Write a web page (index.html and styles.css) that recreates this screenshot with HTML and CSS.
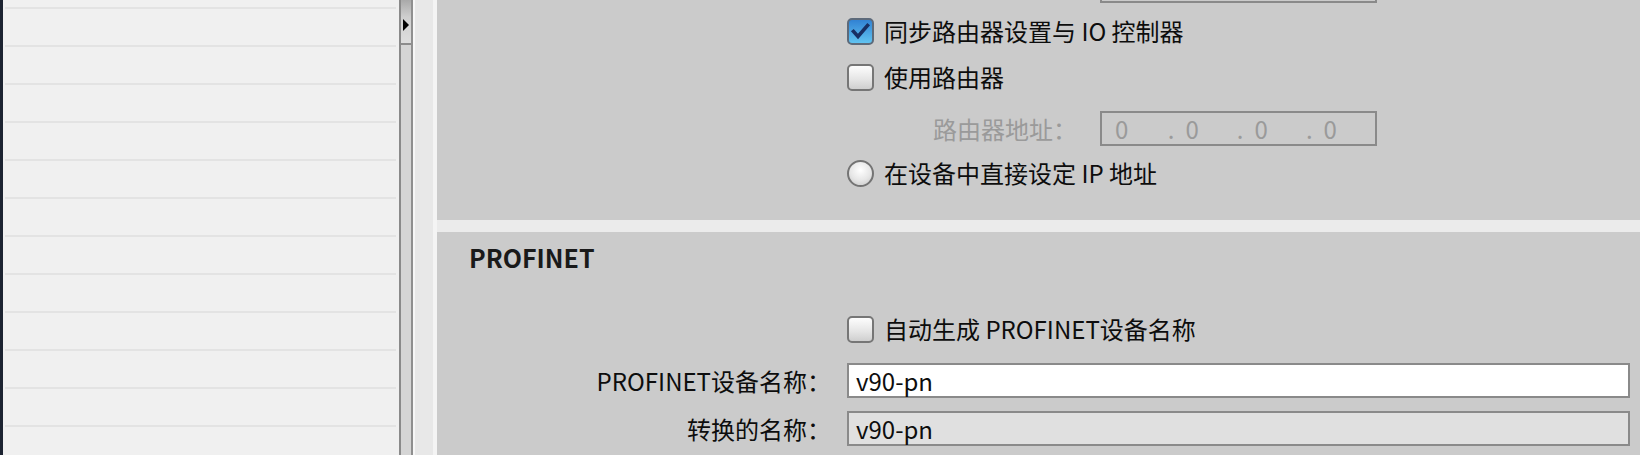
FILE: index.html
```html
<!DOCTYPE html>
<html lang="zh-CN">
<head>
  <meta charset="utf-8">
  <title>PROFINET 接口属性</title>
  <link rel="stylesheet" href="styles.css">
</head>
<body>
  <div class="strip"></div>

  <div class="tree">
    <div class="tree-row"></div>
    <div class="tree-row"></div>
    <div class="tree-row"></div>
    <div class="tree-row"></div>
    <div class="tree-row"></div>
    <div class="tree-row"></div>
    <div class="tree-row"></div>
    <div class="tree-row"></div>
    <div class="tree-row"></div>
    <div class="tree-row"></div>
    <div class="tree-row"></div>
    <div class="tree-row"></div>
    <div class="tree-row"></div>
  </div>

  <div class="splitter">
    <div class="thumb"><span class="arrow"></span></div>
  </div>
  <div class="gutter"></div>

  <div class="content">
    <!-- IP protocol section, scrolled so only its lower part shows -->
    <section class="panel panel-ip">
      <div class="row sub mask-row">
        <span class="sub-label"></span>
        <div class="ipbox"></div>
      </div>

      <div class="row check-row first">
        <span class="check checked">
          <svg width="27" height="27" viewBox="0 0 27 27">
            <defs>
              <linearGradient id="blue" x1="0" y1="0" x2="0" y2="1">
                <stop offset="0" stop-color="#2f7fd2"/>
                <stop offset="1" stop-color="#63c6f2"/>
              </linearGradient>
            </defs>
            <rect x="1" y="1" width="25" height="25" rx="4" fill="url(#blue)" stroke="#5d6a7a" stroke-width="2"/>
            <path d="M6.5 13.5 L11 18.5 L20.5 7.5" fill="none" stroke="#182f63" stroke-width="3.6" stroke-linecap="square"/>
          </svg>
        </span>
        <span class="text">同步路由器设置与 IO 控制器</span>
      </div>

      <div class="row check-row second">
        <span class="check"></span>
        <span class="text">使用路由器</span>
      </div>

      <div class="row sub ip-row">
        <span class="sub-label">路由器地址：</span>
        <div class="ipbox">
          <span class="oct">0</span>
          <span class="oct"><i>.</i>0</span>
          <span class="oct"><i>.</i>0</span>
          <span class="oct"><i>.</i>0</span>
        </div>
      </div>

      <div class="row check-row radio-row">
        <span class="radio"></span>
        <span class="text">在设备中直接设定 IP 地址</span>
      </div>
    </section>

    <section class="panel panel-pn">
      <h2>PROFINET</h2>

      <div class="row check-row auto-row">
        <span class="check"></span>
        <span class="text">自动生成 PROFINET设备名称</span>
      </div>

      <div class="field name-row">
        <label>PROFINET设备名称：</label>
        <div class="input">v90-pn</div>
      </div>

      <div class="field conv-row">
        <label>转换的名称：</label>
        <div class="input readonly">v90-pn</div>
      </div>
    </section>
  </div>
</body>
</html>
```

FILE: styles.css
```css
body {
  margin: 0;
  width: 1640px;
  height: 455px;
  overflow: hidden;
  display: flex;
  background-color: #ebebeb;
  font-family: "Noto Sans CJK SC", "Noto Sans", sans-serif;
  color: #0d0d0d;
}

.strip {
  width: 3px;
  background-color: #1c2331;
}

/* left tree, empty rows */
.tree {
  width: 396px;
  background-color: #f0f0f0;
  overflow: hidden;
}

.tree-row {
  height: 38px;
  box-sizing: border-box;
  margin: 0 3px 0 2px;
  border-bottom: 2px solid #e3e3e3;
}

.tree-row:first-child {
  margin-top: -29px;
}

.splitter {
  width: 10px;
  border-left: 2px solid #8a8a8a;
  border-right: 2px solid #8f8f8f;
  background-color: #d5d5d5;
}

.thumb {
  height: 45px;
  border-bottom: 2px solid #8c8c8c;
  background: linear-gradient(#a9a9a9, #cfcfcf 40%, #dedede);
  display: flex;
  justify-content: center;
  padding-top: 19px;
  box-sizing: border-box;
}

.arrow {
  width: 0;
  height: 0;
  border-left: 6px solid #000;
  border-top: 6px solid transparent;
  border-bottom: 6px solid transparent;
}

.gutter {
  width: 18px;
  border-left: 2px solid #f7f7f7;
  border-right: 4px solid #f4f4f4;
  background-color: #e8e8e8;
}

.content {
  flex: 1;
  display: flex;
  flex-direction: column;
  gap: 12px;
}

.panel {
  background-color: #cbcbcb;
  padding: 0 10px 0 410px;
  font-size: 24px;
  line-height: 30px;
}

.panel-ip {
  margin-top: -44px;
  padding-top: 12px;
  padding-bottom: 29px;
}

.panel-pn {
  padding-top: 10px;
  flex: 1;
}

.row {
  display: flex;
  align-items: center;
}

.check-row {
  height: 36px;
  gap: 10px;
}

.first { margin-top: 10px; }
.second { margin-top: 10px; }
.ip-row { margin-top: 16px; }
.radio-row { margin-top: 9px; }
.auto-row { margin-top: 39px; }

.check,
.radio {
  width: 27px;
  height: 27px;
  box-sizing: border-box;
  flex: none;
}

.check {
  border: 2px solid #767676;
  border-radius: 5px;
  background: linear-gradient(#fdfdfd, #e4e4e4 60%, #cfcfcf);
}

.check.checked {
  border: 0;
  background: none;
}

.check svg {
  display: block;
}

.radio {
  border: 2px solid #747474;
  border-radius: 50%;
  background: radial-gradient(circle at 50% 35%, #ffffff, #e6e6e6 55%, #c4c4c4);
}

.sub {
  gap: 23px;
}

.sub-label {
  width: 230px;
  text-align: right;
  color: #9a9a9a;
}

.ipbox {
  width: 277px;
  height: 35px;
  box-sizing: border-box;
  border: 2px solid #8a8a8a;
  display: flex;
  align-items: center;
  padding-left: 13px;
  color: #9a9a9a;
}

.oct {
  width: 72px;
}

.oct:first-child {
  width: 55px;
}

.oct i {
  font-style: normal;
  margin-right: 11px;
}

.panel-pn h2 {
  margin: 0 0 0 -378px;
  font-size: 25px;
  line-height: 30px;
  font-weight: bold;
  color: #1a1a1a;
}

.field {
  display: grid;
  grid-template-columns: 394px 1fr;
  column-gap: 16px;
  margin-left: -410px;
  align-items: center;
}

.field label {
  text-align: right;
}

.name-row { margin-top: 16px; }
.conv-row { margin-top: 13px; }

.input {
  height: 35px;
  box-sizing: border-box;
  border: 2px solid #8a8a8a;
  background-color: #fff;
  padding-left: 7px;
  line-height: 31px;
}

.input.readonly {
  background-color: #e0e0e0;
}
```
